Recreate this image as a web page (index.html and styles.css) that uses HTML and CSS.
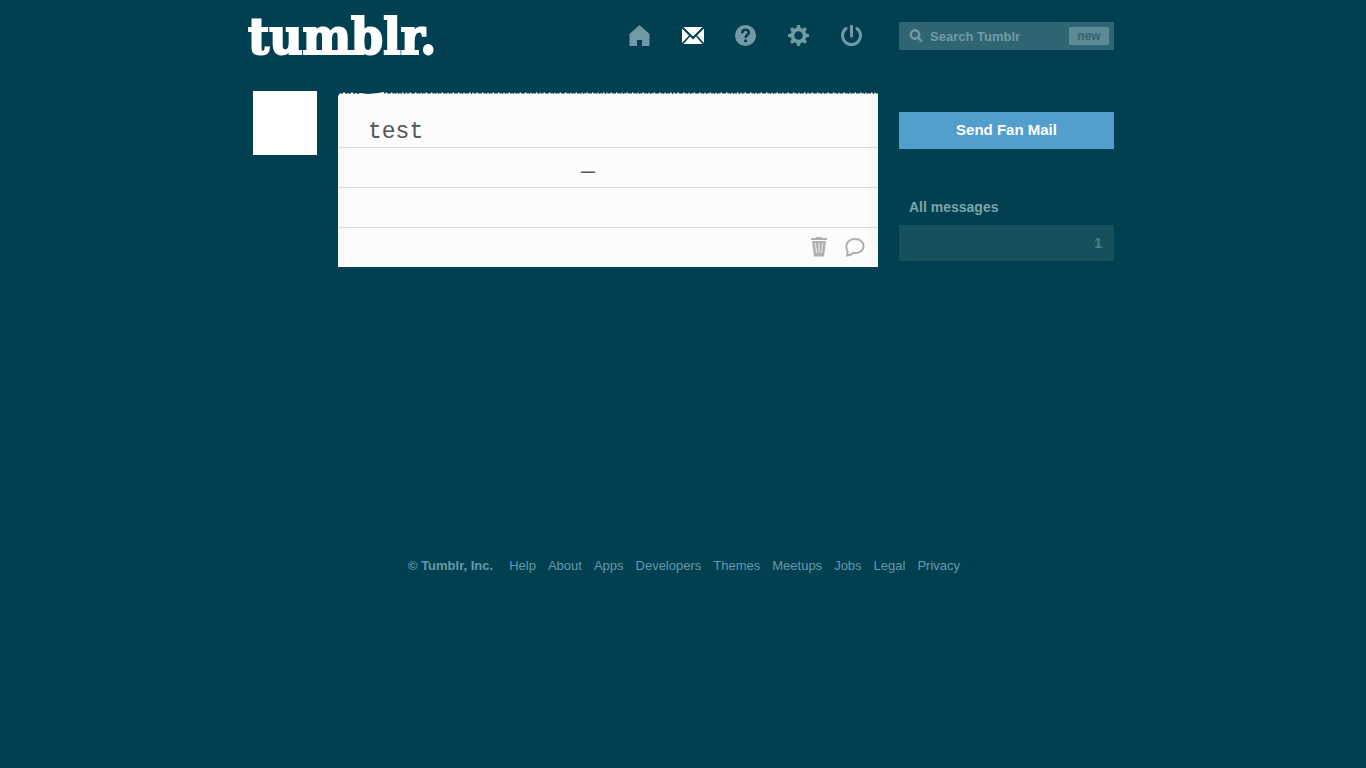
FILE: index.html
```html
<!DOCTYPE html>
<html lang="en">
<head>
<meta charset="utf-8">
<meta name="viewport" content="width=device-width, initial-scale=1">
<title>Messages | Tumblr</title>
<link rel="stylesheet" href="styles.css">
</head>
<body>
<div class="page">
  <header class="header">
    <a class="logo" href="#">tumblr.</a>
    <nav class="nav" aria-label="Main">
      <a href="#" class="nav-link" aria-label="Home"><svg viewBox="0 0 22 22"><path d="M10.500 0 .5 9v12H8v-6h5v6h7.500V9z"/></svg></a>
      <a href="#" class="nav-link current" aria-label="Messages"><svg viewBox="0 0 22 22"><path d="M1.500 2h19L11 11.500zM0 3.500 7 10.500 0 18zM22 3.500V18l-7-7.500zM1.500 19 8 11.500l3 3 3-3 6.500 7.500z"/></svg></a>
      <a href="#" class="nav-link" aria-label="Help"><svg viewBox="0 0 22 22"><circle cx="10.500" cy="10.500" r="10.500"/><path class="cut" d="M7.200 8.300c0-4.800 7-4.400 6.700-.6-.2 2.400-3.300 2.300-3.300 5.100"/><circle class="hole" cx="10.600" cy="15.800" r="1.600"/></svg></a>
      <a href="#" class="nav-link" aria-label="Settings"><svg viewBox="0 0 22 22"><path d="M8 4 9.200 0h2.600L13 4z"/><path d="M8 4 9.200 0h2.600L13 4z" transform="rotate(45 10.500 10.500)"/><path d="M8 4 9.200 0h2.600L13 4z" transform="rotate(90 10.500 10.500)"/><path d="M8 4 9.200 0h2.600L13 4z" transform="rotate(135 10.500 10.500)"/><path d="M8 4 9.200 0h2.600L13 4z" transform="rotate(180 10.500 10.500)"/><path d="M8 4 9.200 0h2.600L13 4z" transform="rotate(225 10.500 10.500)"/><path d="M8 4 9.200 0h2.600L13 4z" transform="rotate(270 10.500 10.500)"/><path d="M8 4 9.200 0h2.600L13 4z" transform="rotate(315 10.500 10.500)"/><circle class="ring" cx="10.500" cy="10.500" r="6"/></svg></a>
      <a href="#" class="nav-link" aria-label="Log out"><svg viewBox="0 0 22 22"><path class="power" d="M5 3.500a9 9 0 1 0 11 0M10.500 1v10"/></svg></a>
    </nav>
    <form class="search">
      <svg class="search-icon" viewBox="0 0 14 14"><circle cx="5.500" cy="5.500" r="4.200"/><path d="m8.500 8.500 4 4"/></svg>
      <input type="search" placeholder="Search Tumblr" aria-label="Search Tumblr">
      <span class="tag">new</span>
    </form>
  </header>

  <main class="main">
    <a class="avatar" href="#" aria-label="Sender"></a>
    <article class="letter">
      <svg class="torn" aria-hidden="true">
        <defs>
          <pattern id="teeth" width="67" height="4" patternUnits="userSpaceOnUse">
            <path d="M0 4V2L1 0 2 2 3 1 4 2 5 0 7 2 8 1 9 2 11 0 12 2 13 1 15 2 16 0 17 2 19 1 20 2 21 0 23 2 24 1 25 2 27 0 28 2 29 1 31 2 32 0 33 2 35 1 36 2 37 0 39 2 40 1 42 2 43 0 44 2 46 1 47 2 48 0 50 2 51 1 52 2 54 0 55 2 56 1 58 2 59 0 60 2 62 1 63 2 65 0 66 2 67 2V4z"/>
          </pattern>
        </defs>
        <path d="M0 4 2 1 4 2 6 0 8 2 10 1 12 2 14 0 16 2 18 1 20 2 22 1 30 2 40 1 46 0V4z"/>
        <rect x="46" width="100%" height="4" fill="url(#teeth)"/>
      </svg>
      <p class="line first">test</p>
      <p class="line signature">—</p>
      <p class="line"></p>
      <div class="actions">
        <button type="button" aria-label="Delete"><svg width="16" height="20" viewBox="0 0 16 20"><path d="M5 1V0h6v1h5v2H0V1zM1 4h14l-2 15.500H3z"/><path class="slots" d="m4.500 6 1 10M8 6v10M11.500 6l-1 10"/></svg></button>
        <button type="button" aria-label="Reply"><svg width="20" height="20" viewBox="0 0 20 20"><path class="bubble" d="M2 18.500c.8-2 .8-3.500.2-5C-.5 6.500 4 2 10 2c5 0 8.500 3 8.500 7 0 4.500-4.500 8-10 6.800C6.500 17.600 4 18.500 2 18.500z"/></svg></button>
      </div>
    </article>
    <aside class="sidebar">
      <button type="button" class="send">Send Fan Mail</button>
      <h2>All messages</h2>
      <a class="count" href="#">1</a>
    </aside>
  </main>

  <footer class="footer">
    <strong>© Tumblr, Inc.</strong>
    <a href="#">Help</a>
    <a href="#">About</a>
    <a href="#">Apps</a>
    <a href="#">Developers</a>
    <a href="#">Themes</a>
    <a href="#">Meetups</a>
    <a href="#">Jobs</a>
    <a href="#">Legal</a>
    <a href="#">Privacy</a>
  </footer>
</div>
</body>
</html>
```
FILE: styles.css
```css
* { box-sizing: border-box; }

body {
  margin: 0;
  background: #004050;
  font-family: "Liberation Sans", Arial, sans-serif;
  font-size: 13px;
  line-height: 16px;
}

a { text-decoration: none; color: inherit; }
button { border: 0; padding: 0; background: none; font: inherit; cursor: pointer; }
svg { display: block; }

.page {
  max-width: 870px;
  margin: 0 auto;
  padding-right: 4px;
}

.header {
  display: flex;
  align-items: center;
  height: 72px;
}

.logo {
  margin-right: auto;
  color: #fff;
  font-family: "DejaVu Serif Condensed", "DejaVu Serif", serif;
  font-size: 51px;
  font-weight: bold;
  line-height: 72px;
  -webkit-text-stroke: 2px #fff;
}

.nav {
  display: flex;
  gap: 31px;
  margin-right: 36px;
}

.nav-link { color: #7299a5; }
.nav-link.current { color: #fff; }
.nav-link svg { width: 22px; height: 22px; fill: currentColor; }
.nav-link .cut { fill: none; stroke: #004050; stroke-width: 2.600; }
.nav-link .hole { fill: #004050; }
.nav-link .ring { fill: #004050; stroke: currentColor; stroke-width: 3.500; }
.nav-link .power { fill: none; stroke: currentColor; stroke-width: 3; stroke-linecap: round; }

.search {
  display: flex;
  align-items: center;
  gap: 6px;
  width: 215px;
  height: 28px;
  padding: 0 5px 0 10px;
  background: #306673;
}

.search-icon {
  flex: none;
  width: 15px;
  height: 14px;
  fill: none;
  stroke: #729aa5;
  stroke-width: 2.400;
}

.search input {
  flex: 1;
  min-width: 0;
  padding: 2px 0 0;
  border: 0;
  background: none;
  color: #fff;
  font: bold 13px/16px "Liberation Sans", Arial, sans-serif;
}

.search input::placeholder { color: #729aa5; opacity: 1; }

.tag {
  width: 40px;
  padding: 1px 0;
  border-radius: 1px;
  background: #5c8b96;
  color: #306673;
  font-size: 12px;
  font-weight: bold;
  text-align: center;
}

.main {
  display: grid;
  grid-template-columns: 64px 1fr 215px;
  gap: 21px;
  align-items: start;
  min-height: 466px;
  padding: 19px 0 0 5px;
}

.avatar { height: 64px; background: #fff; }

.letter {
  background: linear-gradient(90deg, #f7f7f7, #fcfcfc 10px, #fcfcfc calc(100% - 10px), #f7f5f5) 0 5px no-repeat;
}

.torn { width: 100%; height: 5px; padding-top: 1px; fill: #fcfcfc; }

.line {
  height: 40px;
  margin: 0;
  padding: 0 30px;
  border-bottom: 1px solid #cddddf;
  color: #555;
  font-family: "Liberation Mono", "Courier New", monospace;
  font-size: 23px;
  line-height: 40px;
}

.first { height: 52px; padding-top: 16px; }
.signature { padding-left: 45%; line-height: 48px; }

.actions {
  display: flex;
  justify-content: flex-end;
  align-items: center;
  gap: 18px;
  height: 39px;
  padding: 0 13px 2px 0;
}

.actions svg { fill: #b0b0b0; }
.actions .slots { stroke: #f0f0f0; stroke-width: 1; fill: none; }
.actions .bubble { fill: none; stroke: #b0b0b0; stroke-width: 2; }

.sidebar { padding-top: 21px; }

.send {
  display: block;
  width: 100%;
  height: 37px;
  padding-bottom: 2px;
  background: #529ecc;
  color: #fff;
  font-size: 15px;
  font-weight: bold;
}

.sidebar h2 {
  margin: 50px 10px 10px;
  color: #7fa3ad;
  font-size: 14px;
  line-height: 16px;
}

.count {
  display: block;
  padding: 10px 12px;
  background: #16505d;
  color: #4f7f8b;
  font-size: 14px;
  font-weight: bold;
  text-align: right;
}

.footer {
  display: flex;
  flex-wrap: wrap;
  justify-content: center;
  gap: 12px;
  padding: 20px 0 20px 6px;
  color: #6699a9;
}

.footer strong { margin-right: 4px; }
```
